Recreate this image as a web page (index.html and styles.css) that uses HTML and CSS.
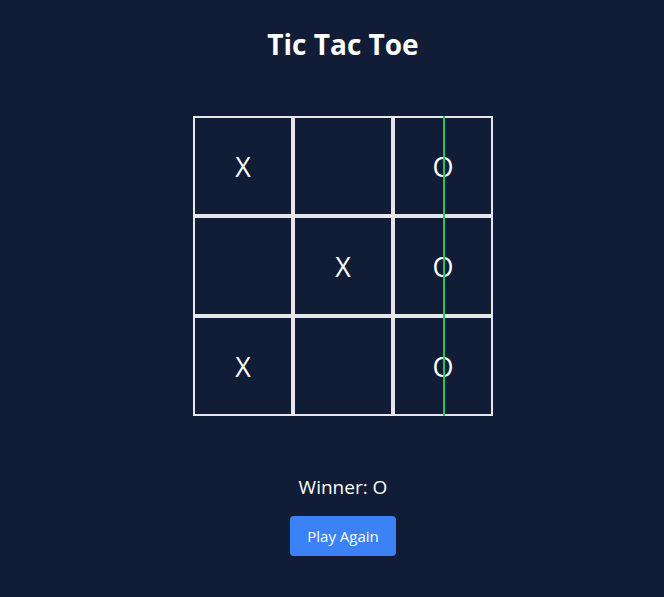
FILE: index.html
```html
<!DOCTYPE html>
<html>
<head>
<meta charset="utf-8">
<link rel="stylesheet" href="styles.css">
</head>
<body>
<main class="app">
  <h1 class="title">Tic Tac Toe</h1>
  <div class="board">
    <div class="cell">X</div>
    <div class="cell"></div>
    <div class="cell">O</div>
    <div class="cell"></div>
    <div class="cell">X</div>
    <div class="cell">O</div>
    <div class="cell">X</div>
    <div class="cell"></div>
    <div class="cell">O</div>
    <div class="win-line"></div>
  </div>
  <p class="status">Winner: O</p>
  <button class="btn">Play Again</button>
</main>
</body>
</html>
```

FILE: styles.css
```css
* { box-sizing: border-box; }
html, body {
  margin: 0;
  background: #111c36;
  height: 100%;
}
body {
  font-family: "Open Sans", "Noto Sans", sans-serif;
  color: #fff;
}
.app {
  display: flex;
  flex-direction: column;
  align-items: center;
  padding-top: 26px;
  padding-left: 22px;
}
.title {
  margin: 0;
  font-size: 28px;
  line-height: 36px;
  font-weight: 700;
}
.board {
  position: relative;
  margin-top: 54px;
  display: grid;
  grid-template-columns: repeat(3, 100px);
  grid-template-rows: repeat(3, 100px);
}
.cell {
  border: 2px solid #e5e7eb;
  display: flex;
  align-items: center;
  justify-content: center;
  font-size: 27px;
  line-height: 1;
}
.win-line {
  position: absolute;
  left: 250px;
  top: 0;
  width: 2px;
  height: 300px;
  background: #22c55e;
}
.status {
  margin: 57px 0 0;
  font-size: 19px;
  line-height: 28px;
}
.btn {
  margin-top: 15px;
  font-family: inherit;
  font-size: 15px;
  line-height: 24px;
  padding: 8px 17px;
  border: 0;
  border-radius: 4px;
  background: #3b82f6;
  color: #fff;
}
```
